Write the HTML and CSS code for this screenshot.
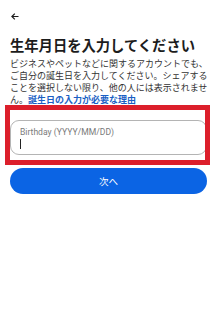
FILE: index.html
```html
<!DOCTYPE html>
<html lang="ja">
<head>
<meta charset="utf-8">
<link rel="stylesheet" href="styles.css">
</head>
<body>
<div class="page">
  <div class="back">
    <svg width="8" height="7" viewBox="0 0 8 7"><path d="M7.5 3.5H1M3.8 0.6L0.9 3.5L3.8 6.4" fill="none" stroke="#1c1c1c" stroke-width="1.2"/></svg>
  </div>
  <h1 class="title">生年月日を入力してください</h1>
  <p class="desc">ビジネスやペットなどに関するアカウントでも、ご自分の誕生日を入力してください。シェアすることを選択しない限り、他の人には表示されません。<a class="link">誕生日の入力が必要な理由</a></p>
  <div class="field">
    <div class="placeholder">Birthday (YYYY/MM/DD)</div>
    <div class="caret"></div>
  </div>
  <div class="btn">次へ</div>
  <div class="highlight"></div>
</div>
</body>
</html>
```
FILE: styles.css
```css
html, body {
  margin: 0;
  padding: 0;
  background: #fff;
}
body {
  font-family: "Noto Sans CJK JP", "Noto Sans", sans-serif;
  color: #1c1c1c;
}
.page {
  position: relative;
  padding: 13px 6px 0 10px;
  width: 216px;
  height: 332px;
  box-sizing: border-box;
}
.back {
  height: 7px;
  padding-left: 1px;
  display: flex;
}
.title {
  margin: 15px 0 0 0;
  font-size: 14.3px;
  line-height: 19px;
  font-weight: 700;
  letter-spacing: 0;
}
.desc {
  margin: 4px 0 0 0;
  font-size: 9px;
  line-height: 12px;
  color: #333;
}
.link {
  color: #1a5fc4;
  font-weight: 700;
}
.field {
  margin: 14px 3px 0 0;
  height: 35px;
  border: 1px solid #b4b4b4;
  border-radius: 9px;
  box-sizing: border-box;
  padding: 6px 0 0 9px;
  display: flex;
  flex-direction: column;
  gap: 2px;
}
.placeholder {
  font-family: Roboto, "Noto Sans", sans-serif;
  font-size: 8.6px;
  line-height: 10px;
  color: #7a7a7a;
}
.caret {
  width: 1.3px;
  height: 10px;
  background: #222;
}
.btn {
  margin: 13px 3px 0 0;
  height: 26px;
  border-radius: 13px;
  background: #0b64e4;
  color: #fff;
  font-size: 9.5px;
  display: flex;
  align-items: center;
  justify-content: center;
}
.highlight {
  position: absolute;
  left: 5px;
  top: 105px;
  width: 205px;
  height: 60px;
  border: 5px solid #dc1f2b;
  box-sizing: border-box;
}
```
